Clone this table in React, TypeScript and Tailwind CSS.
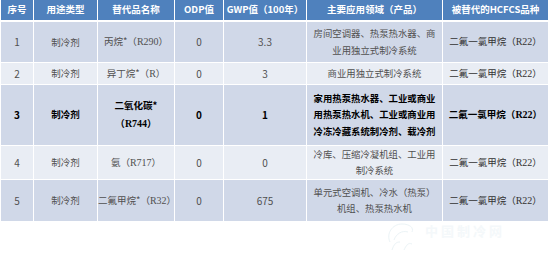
import React from 'react';

const cjk = "font-['Noto_Sans_CJK_SC','Noto_Sans',sans-serif]";

const Code = ({ children }: { children: React.ReactNode }) => (
  <span className="font-['Liberation_Serif','Noto_Sans_CJK_SC',serif] text-[10px]">{children}</span>
);

type Row = {
  no: string;
  type: string;
  name: React.ReactNode;
  odp: string;
  gwp: string;
  use: string[];
  old: string;
  bold?: boolean;
  h: string;
  bg: string;
};

const rows: Row[] = [
  {
    no: '1',
    type: '制冷剂',
    name: <>丙烷*（<Code>R290</Code>）</>,
    odp: '0',
    gwp: '3.3',
    use: ['房间空调器、热泵热水器、商', '业用独立式制冷系统'],
    old: 'R22',
    h: 'h-[41px]',
    bg: 'bg-[#d0d8e8]',
  },
  {
    no: '2',
    type: '制冷剂',
    name: <>异丁烷*（<Code>R</Code>）</>,
    odp: '0',
    gwp: '3',
    use: ['商业用独立式制冷系统'],
    old: 'R22',
    h: 'h-[22px]',
    bg: 'bg-[#e9edf4]',
  },
  {
    no: '3',
    type: '制冷剂',
    name: <>二氧化碳*<br />（<Code>R744</Code>）</>,
    odp: '0',
    gwp: '1',
    use: ['家用热泵热水器、工业或商业', '用热泵热水机、工业或商业用', '冷冻冷藏系统制冷剂、载冷剂'],
    old: 'R22',
    bold: true,
    h: 'h-[61px]',
    bg: 'bg-[#d0d8e8]',
  },
  {
    no: '4',
    type: '制冷剂',
    name: <>氨（<Code>R717</Code>）</>,
    odp: '0',
    gwp: '0',
    use: ['冷库、压缩冷凝机组、工业用', '制冷系统'],
    old: 'R22',
    h: 'h-[33px]',
    bg: 'bg-[#e9edf4]',
  },
  {
    no: '5',
    type: '制冷剂',
    name: <>二氟甲烷*（<Code>R32</Code>）</>,
    odp: '0',
    gwp: '675',
    use: ['单元式空调机、冷水（热泵）', '机组、热泵热水机'],
    old: 'R22',
    h: 'h-[42px]',
    bg: 'bg-[#d0d8e8]',
  },
];

const heads = ['序号', '用途类型', '替代品名称', 'ODP值', 'GWP值（100年）', '主要应用领域（产品）', '被替代的HCFCS品种'];

export default function App() {
  return (
    <div className={`relative w-[549px] h-[255px] bg-white overflow-hidden ${cjk}`}>
      <table className="table-fixed border-collapse w-[548px] text-center">
        <colgroup>
          <col className="w-[33px]" />
          <col className="w-[64px]" />
          <col className="w-[77px]" />
          <col className="w-[49px]" />
          <col className="w-[83px]" />
          <col className="w-[136px]" />
          <col className="w-[106px]" />
        </colgroup>
        <thead>
          <tr className="h-[21px] bg-[#4f81bd] border-b-2 border-white">
            {heads.map((t) => (
              <th
                key={t}
                className="p-0 border-x border-white text-[9.5px] font-bold text-white leading-none whitespace-nowrap"
              >
                {t}
              </th>
            ))}
          </tr>
        </thead>
        <tbody>
          {rows.map((r) => (
            <tr key={r.no} className={`${r.h} ${r.bg} border-b border-white`}>
              <td className={`p-0 border-x border-white text-[10px] ${r.bold ? 'font-bold text-black' : 'text-[#505050]'}`}>{r.no}</td>
              <td className={`p-0 border-x border-white text-[9.5px] ${r.bold ? 'font-bold text-black' : 'text-[#505050]'}`}>{r.type}</td>
              <td className={`p-0 border-x border-white text-[9.5px] leading-[18px] whitespace-nowrap ${r.bold ? 'font-bold text-black' : 'text-[#505050]'}`}>{r.name}</td>
              <td className={`p-0 border-x border-white text-[10px] ${r.bold ? 'font-bold text-black' : 'text-[#505050]'}`}>{r.odp}</td>
              <td className={`p-0 border-x border-white text-[10px] ${r.bold ? 'font-bold text-black' : 'text-[#505050]'}`}>{r.gwp}</td>
              <td className={`p-0 border-x border-white text-[9.4px] leading-[16.5px] whitespace-nowrap ${r.bold ? 'font-bold text-black' : 'text-[#505050]'}`}>
                {r.use.map((l, i) => (
                  <div key={i}>{l}</div>
                ))}
              </td>
              <td className={`p-0 border-x border-white text-[9.5px] whitespace-nowrap ${r.bold ? 'font-bold text-black' : 'text-[#333]'}`}>
                二氟一氯甲烷（<Code>{r.old}</Code>）
              </td>
            </tr>
          ))}
        </tbody>
      </table>

      {/* faint watermark */}
      <svg className="absolute left-[384px] top-[220px] opacity-40" width="36" height="32" viewBox="0 0 36 32" fill="none" stroke="#cfe3ea" strokeWidth="1">
        <path d="M6 22 C2 14 8 4 18 4 C26 4 30 8 28 12" />
        <path d="M10 20 C12 14 18 10 24 12" />
        <path d="M8 30 C10 24 12 22 16 22 M20 30 C22 26 24 22 28 24" />
      </svg>
      <div className="absolute left-[425px] top-[221px] text-[13px] font-bold text-[#f4f8fa] tracking-[3px] whitespace-nowrap">
        中国制冷网
      </div>
    </div>
  );
}
